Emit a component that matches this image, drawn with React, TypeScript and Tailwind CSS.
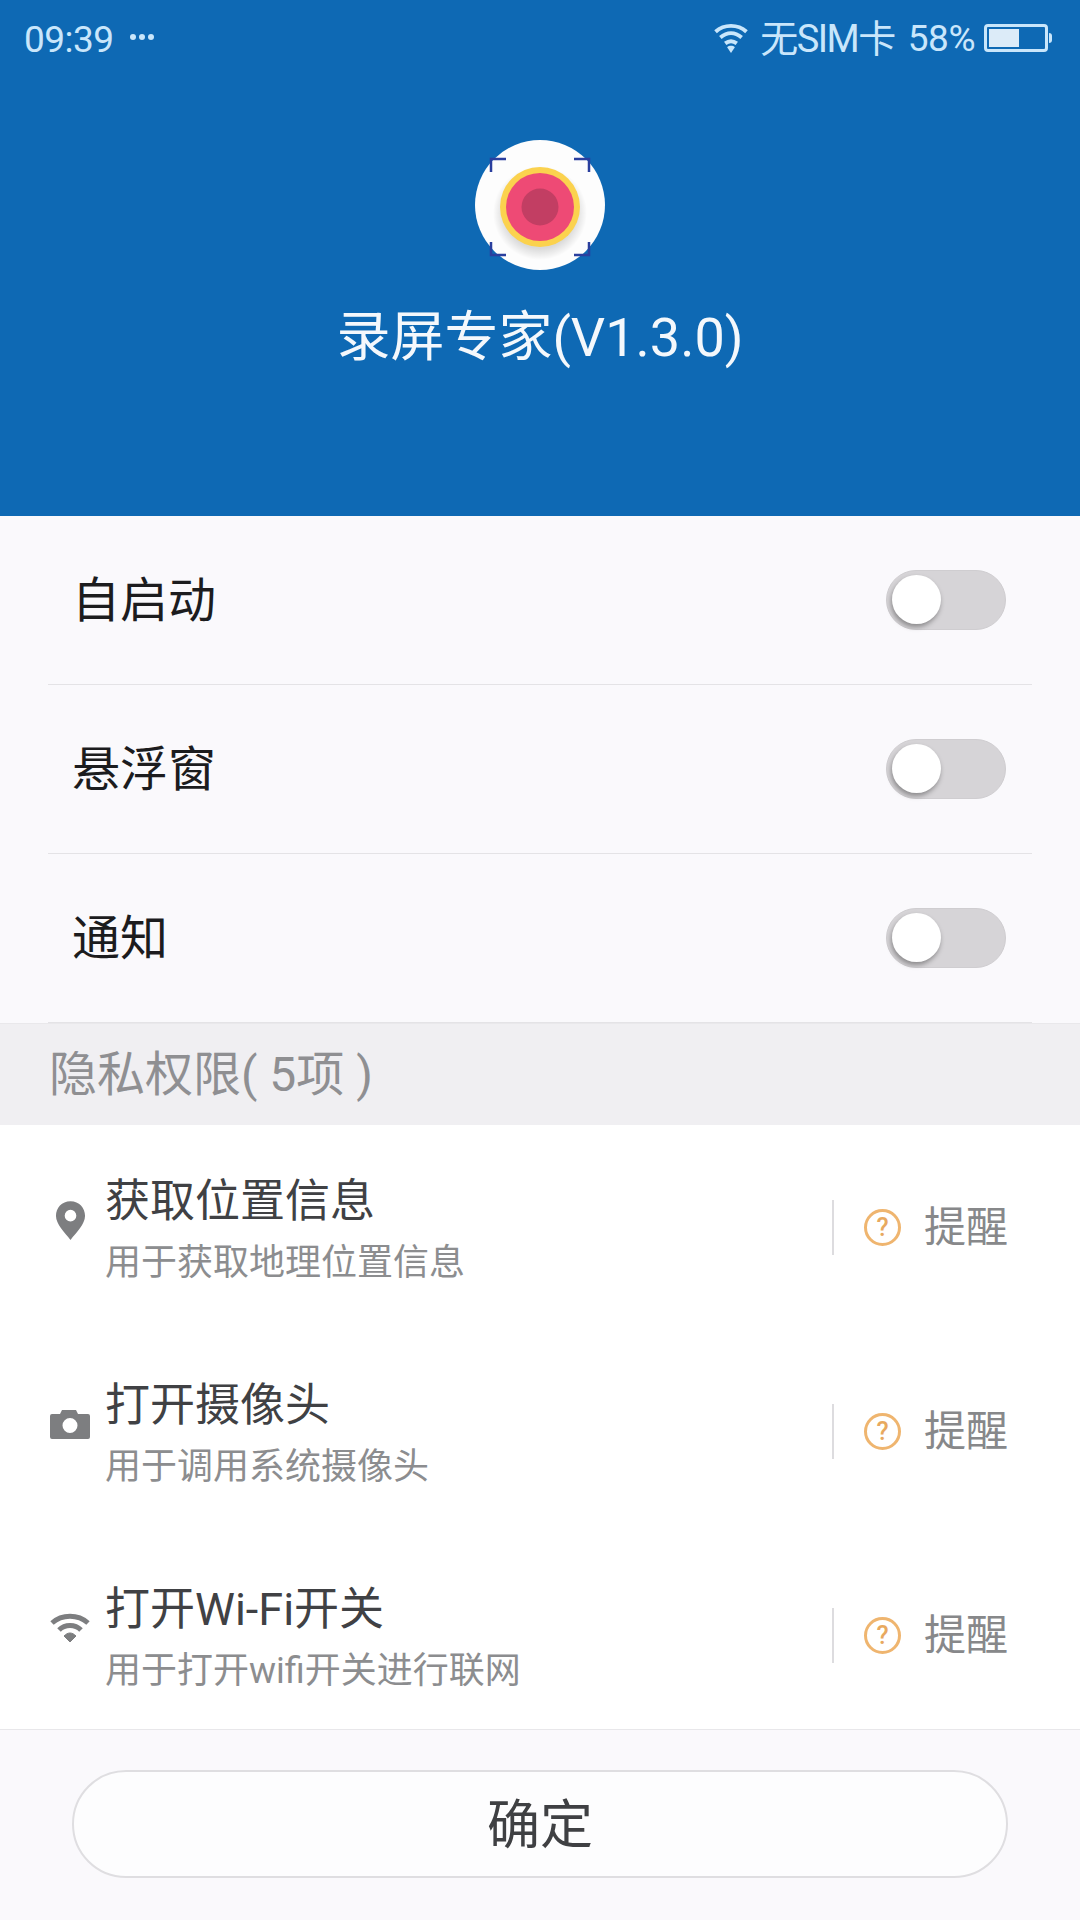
const font = "font-['Roboto','Noto_Sans_CJK_SC',sans-serif]";

const WifiIcon = ({ className }: { className: string }) => (
  <svg viewBox="0 0 40 30" className={className} fill="none" stroke="currentColor">
    <path d="M2 10 C12 1 28 1 38 10" strokeWidth="5" />
    <path d="M9 17 C15 11 25 11 31 17" strokeWidth="5" />
    <path d="M14 23 L20 29 L26 23 C22 19 18 19 14 23 Z" fill="currentColor" strokeWidth="1" />
  </svg>
);

const StatusBar = () => (
  <div className="flex h-[76px] items-center justify-between pl-6 pr-[28px] text-[37px] text-[#c9e6fb]">
    <div className="flex items-center gap-4">
      <span className="pt-[3px] tracking-[-0.5px]">09:39</span>
      <span className="flex gap-[3px] pb-[3px]">
        <i className="size-[6px] rounded-full bg-[#c9e6fb]" />
        <i className="size-[6px] rounded-full bg-[#c9e6fb]" />
        <i className="size-[6px] rounded-full bg-[#c9e6fb]" />
      </span>
    </div>
    <div className="flex items-center">
      <svg viewBox="0 0 36 30" className="mr-[11px] h-[29px] w-[36px]" fill="none" stroke="currentColor">
        <path d="M2 8 C11 0 25 0 34 8" strokeWidth="4" />
        <path d="M7 14 C14 8 22 8 29 14" strokeWidth="4" />
        <path d="M12 20 C16 17 20 17 24 20" strokeWidth="4" />
        <path d="M14 24 L18 30 L22 24 C20 22 16 22 14 24 Z" fill="currentColor" strokeWidth="0" />
      </svg>
      <span className="pt-[2px] text-[38px] tracking-[-1.5px]">无SIM卡</span>
      <span className="ml-[13px] pt-[2px] tracking-[-0.5px]">58%</span>
      <span className="ml-[9px] flex items-center">
        <span className="flex h-[28px] w-[64px] rounded-[4px] border-[3px] border-[#c9e6fb] p-[2px]">
          <span className="h-full w-[30px] bg-[#dcebf8]" />
        </span>
        <span className="ml-[1px] h-[10px] w-[3px] rounded-r-sm bg-[#c9e6fb]" />
      </span>
    </div>
  </div>
);

const Logo = () => (
  <svg viewBox="0 0 132 132" className="size-[132px]">
    <defs>
      <radialGradient id="logo-shadow">
        <stop offset="75%" stopColor="#000" stopOpacity="0.14" />
        <stop offset="100%" stopColor="#000" stopOpacity="0" />
      </radialGradient>
    </defs>
    <circle cx="66" cy="66" r="65" fill="#fdfdfd" />
    <g fill="none" stroke="#2a3f9e" strokeWidth="2.5">
      <path d="M17 33 V20 H32" />
      <path d="M100 20 H115 V33" />
      <path d="M17 103 V116 H32" />
      <path d="M100 116 H115 V103" />
    </g>
    <circle cx="66" cy="74" r="47" fill="url(#logo-shadow)" />
    <circle cx="66" cy="68" r="40" fill="#fbd24e" />
    <circle cx="66" cy="68" r="34" fill="#ee4a75" />
    <circle cx="66" cy="68" r="18.5" fill="#c23e63" />
  </svg>
);

const Toggle = () => (
  <div className="flex h-[60px] w-[120px] items-center rounded-full border border-[#cfcdd0] bg-[#d6d4d7] pl-[5px]">
    <div className="size-[49px] rounded-full bg-white shadow-[-1px_3px_5px_rgba(0,0,0,0.35)]" />
  </div>
);

const SwitchRow = ({ label }: { label: string }) => (
  <div className="mx-12 flex h-[169px] items-center justify-between border-b border-[#e4e3e6] pb-[1px] pl-6 pr-[26px]">
    <span className="pt-[2px] text-[48px] text-[#1c1c1e]">{label}</span>
    <Toggle />
  </div>
);

const PinIcon = () => (
  <svg viewBox="0 0 32 42" className="h-[41px] w-[31px]">
    <path
      fillRule="evenodd"
      d="M16 1 C7 1 1 8 1 16 C1 25 10 33 16 41 C22 33 31 25 31 16 C31 8 25 1 16 1 Z M16 10 A6 6 0 1 1 16 22 A6 6 0 1 1 16 10 Z"
      fill="#7d7e80"
    />
  </svg>
);

const CameraIcon = () => (
  <svg viewBox="0 0 40 30" className="h-[30px] w-[40px]">
    <path
      fillRule="evenodd"
      d="M2 5 H10 L12 1 H26 L28 5 H38 Q40 5 40 7 V28 Q40 30 38 30 H2 Q0 30 0 28 V7 Q0 5 2 5 Z M20 9 A7.5 7.5 0 1 0 20 24 A7.5 7.5 0 1 0 20 9 Z"
      fill="#7d7e80"
    />
  </svg>
);

const permissions = [
  { title: "获取位置信息", desc: "用于获取地理位置信息", icon: <PinIcon /> },
  { title: "打开摄像头", desc: "用于调用系统摄像头", icon: <CameraIcon /> },
  {
    title: "打开Wi-Fi开关",
    desc: "用于打开wifi开关进行联网",
    icon: <WifiIcon className="h-[30px] w-[40px] text-[#7d7e80]" />,
  },
];

const PermissionRow = ({ title, desc, icon }: { title: string; desc: string; icon: React.ReactNode }) => (
  <div className="flex h-[204px] items-center pl-[50px] pr-[72px]">
    <div className="flex w-[40px] justify-center pb-[14px]">{icon}</div>
    <div className="ml-[15px] flex-1 pt-[4px]">
      <div className="text-[45px] leading-[58px] text-[#404144]">{title}</div>
      <div className="mt-[9px] text-[36px] leading-[46px] text-[#8c8d8f]">{desc}</div>
    </div>
    <div className="h-[55px] w-[2px] bg-[#dddcdf]" />
    <div className="ml-[30px] flex size-[37px] items-center justify-center rounded-full border-[3px] border-[#efb56f] text-[25px] font-medium leading-none text-[#e8a95f]">
      ?
    </div>
    <div className="ml-[23px] text-[42px] text-[#87888a]">提醒</div>
  </div>
);

export default function App() {
  return (
    <div className={`${font} flex h-[1920px] w-[1080px] flex-col bg-[#faf9fc]`}>
      <header className="h-[516px] bg-[#0e69b4]">
        <StatusBar />
        <div className="mt-[63px] flex flex-col items-center">
          <Logo />
          <h1 className="mt-[32px] text-[54px] leading-[70px] text-[#f4f8fc]">录屏专家(V1.3.0)</h1>
        </div>
      </header>

      <section>
        <SwitchRow label="自启动" />
        <SwitchRow label="悬浮窗" />
        <SwitchRow label="通知" />
      </section>

      <div className="flex h-[102px] items-center border-t border-[#e9e8eb] bg-[#f0eff2] pl-[49px] text-[48px] text-[#8f8f92]">
        隐私权限( 5项 )
      </div>

      <section className="h-[604px] bg-white">
        {permissions.map((p) => (
          <PermissionRow key={p.title} title={p.title} desc={p.desc} icon={p.icon} />
        ))}
      </section>

      <footer className="flex-1 border-t border-[#e8e7ea] px-[72px] pt-[40px]">
        <button className="h-[108px] w-full rounded-full border-2 border-[#dfdee1] bg-[#fdfdfe] pt-[5px] text-[53px] text-[#3f4043]">
          确定
        </button>
      </footer>
    </div>
  );
}
